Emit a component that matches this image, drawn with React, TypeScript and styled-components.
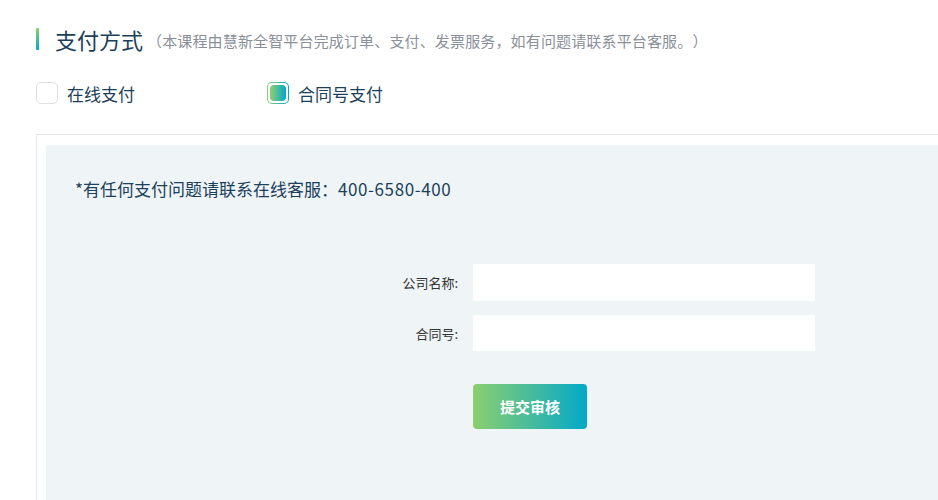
import React, { useState } from "react";
import styled, { createGlobalStyle } from "styled-components";

const GlobalStyle = createGlobalStyle`
	html, body {
		margin: 0;
		padding: 0;
		background: #fff;
		overflow: hidden;
	}
	body {
		font-family: "Noto Sans CJK SC", "Noto Sans", sans-serif;
		text-spacing-trim: space-all;
	}
`;

const brand = "linear-gradient(90deg, #8ccf6e, #03a9c8)";

const Page = styled.div`
	width: 1100px;
	padding: 25px 0 0 36px;
	box-sizing: border-box;
`;

const Header = styled.div`
	display: flex;
	align-items: center;
	height: 28px;
`;

const Accent = styled.span`
	width: 3px;
	height: 22px;
	border-radius: 1px;
	background: linear-gradient(180deg, #8ccf6e, #03a9c8);
	margin-right: 16px;
`;

const Title = styled.h2`
	margin: 0;
	font-size: 22px;
	font-weight: 400;
	color: #1c3f5c;
	line-height: 28px;
`;

const Subtitle = styled.span`
	font-size: 15px;
	color: #8a8f99;
	margin-left: 4px;
	margin-top: 3px;
	letter-spacing: 0.15px;
`;

const Options = styled.div`
	display: flex;
	align-items: center;
	margin-top: 28px;
	height: 24px;
`;

const Option = styled.label`
	display: flex;
	align-items: center;
	width: 231px;
	cursor: pointer;
	font-size: 17px;
	color: #1c3f5c;
`;

const Box = styled.span<{ $checked: boolean }>`
	width: 22px;
	height: 22px;
	box-sizing: border-box;
	border-radius: 5px;
	border: 1px solid ${(p) => (p.$checked ? "transparent" : "#dcdfe4")};
	background: ${(p) =>
		p.$checked
			? `linear-gradient(#fff, #fff) padding-box, ${brand} border-box`
			: "#fff"};
	padding: 2px;
	margin-right: 9px;
	display: flex;

	&::after {
		content: "";
		flex: 1;
		border-radius: 4px;
		background: ${(p) => (p.$checked ? brand : "transparent")};
	}
`;

const Panel = styled.div`
	margin-top: 29px;
	border: 1px solid #e6e8eb;
	border-right: none;
	padding: 10px 0 0 9px;
	height: 400px;
`;

const Inner = styled.div`
	background: #eff4f7;
	height: 100%;
	padding: 30px 0 0 29px;
	box-sizing: border-box;
`;

const Notice = styled.p`
	margin: 0;
	font-size: 17px;
	color: #1c3f5c;
	line-height: 28px;
`;

const Phone = styled.span`
	letter-spacing: 0.6px;
`;

const Form = styled.form`
	display: grid;
	grid-template-columns: 383px 342px;
	column-gap: 15px;
	row-gap: 14px;
	margin-top: 61px;
	align-items: center;
`;

const Label = styled.span`
	justify-self: end;
	font-size: 13px;
	color: #333;
`;

const Input = styled.input<{ $tall?: boolean }>`
	height: ${(p) => (p.$tall ? 37 : 36)}px;
	border: none;
	outline: none;
	background: #fff;
	padding: 0 10px;
	font-size: 14px;
	font-family: inherit;
	box-sizing: border-box;
	width: 100%;
`;

const Submit = styled.button`
	grid-column: 2;
	justify-self: start;
	margin-top: 19px;
	width: 114px;
	height: 45px;
	border: none;
	border-radius: 4px;
	background: ${brand};
	color: #fff;
	font-size: 15px;
	font-weight: 700;
	font-family: inherit;
	cursor: pointer;
`;

export default function App() {
	const [method, setMethod] = useState("contract");
	const [company, setCompany] = useState("");
	const [contract, setContract] = useState("");

	return (
		<>
			<GlobalStyle />
			<Page>
				<Header>
					<Accent />
					<Title>支付方式</Title>
					<Subtitle>（本课程由慧新全智平台完成订单、支付、发票服务，如有问题请联系平台客服。）</Subtitle>
				</Header>
				<Options>
					<Option onClick={() => setMethod("online")}>
						<Box $checked={method === "online"} />
						在线支付
					</Option>
					<Option onClick={() => setMethod("contract")}>
						<Box $checked={method === "contract"} />
						合同号支付
					</Option>
				</Options>
				<Panel>
					<Inner>
						<Notice>
							*有任何支付问题请联系在线客服：<Phone>400-6580-400</Phone>
						</Notice>
						<Form onSubmit={(e) => e.preventDefault()}>
							<Label>公司名称:</Label>
							<Input $tall value={company} onChange={(e) => setCompany(e.target.value)} />
							<Label>合同号:</Label>
							<Input value={contract} onChange={(e) => setContract(e.target.value)} />
							<Submit type="submit">提交审核</Submit>
						</Form>
					</Inner>
				</Panel>
			</Page>
		</>
	);
}
